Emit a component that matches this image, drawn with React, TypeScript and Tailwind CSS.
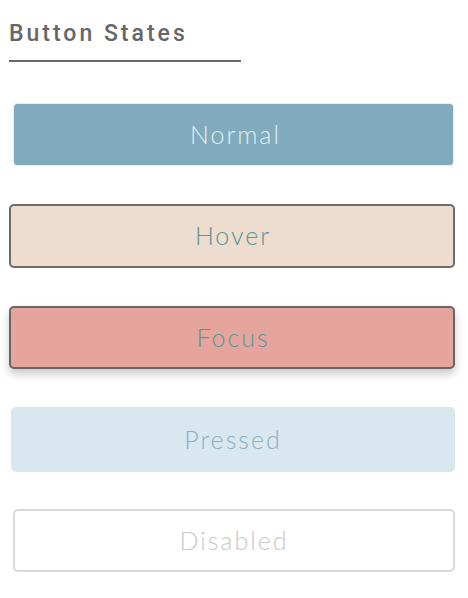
import React from "react";

export default function App() {
  return (
    <div className="w-[468px] h-[598px] bg-white relative overflow-hidden">
      <div className="pl-[9px] pt-[20px]">
        <div className="w-[232px] border-b-2 border-[#666666] pb-[12px]">
          <span className="block text-[23px] leading-[28px] font-medium tracking-[3px] text-[#666666] [font-family:Roboto,'Liberation_Sans',sans-serif]">
            Button States
          </span>
        </div>
      </div>
      <div className="flex flex-col [font-family:Lato,'Open_Sans',sans-serif] font-light text-[25px]">
        <div className="mt-[41px] ml-[13px] w-[441px] h-[63px] rounded-[4px] border border-[#ececec] bg-[#80aabd] flex items-center justify-center text-[#e3eef2] tracking-[2px] pl-[4px]">
          Normal
        </div>
        <div className="mt-[38px] ml-[9px] w-[446px] h-[64px] rounded-[5px] border-2 border-[#6b6b6b] bg-[#eedccf] flex items-center justify-center text-[#5a9597] tracking-[2px] pl-[2px]">
          Hover
        </div>
        <div className="mt-[38px] ml-[9px] w-[446px] h-[63px] rounded-[5px] border-2 border-[#666666] bg-[#e6a59c] flex items-center justify-center text-[#5a9597] tracking-[2px] pl-[2px] shadow-[0_5px_8px_rgba(0,0,0,0.22)]">
          Focus
        </div>
        <div className="mt-[38px] ml-[11px] w-[444px] h-[65px] rounded-[5px] bg-[#d9e7f0] flex items-center justify-center text-[#8ab0c2] tracking-[2px]">
          Pressed
        </div>
        <div className="mt-[37px] ml-[13px] w-[442px] h-[63px] rounded-[5px] border-2 border-[#d9d9d9] bg-white flex items-center justify-center text-[#c8c8c8] tracking-[2px]">
          Disabled
        </div>
      </div>
    </div>
  );
}
